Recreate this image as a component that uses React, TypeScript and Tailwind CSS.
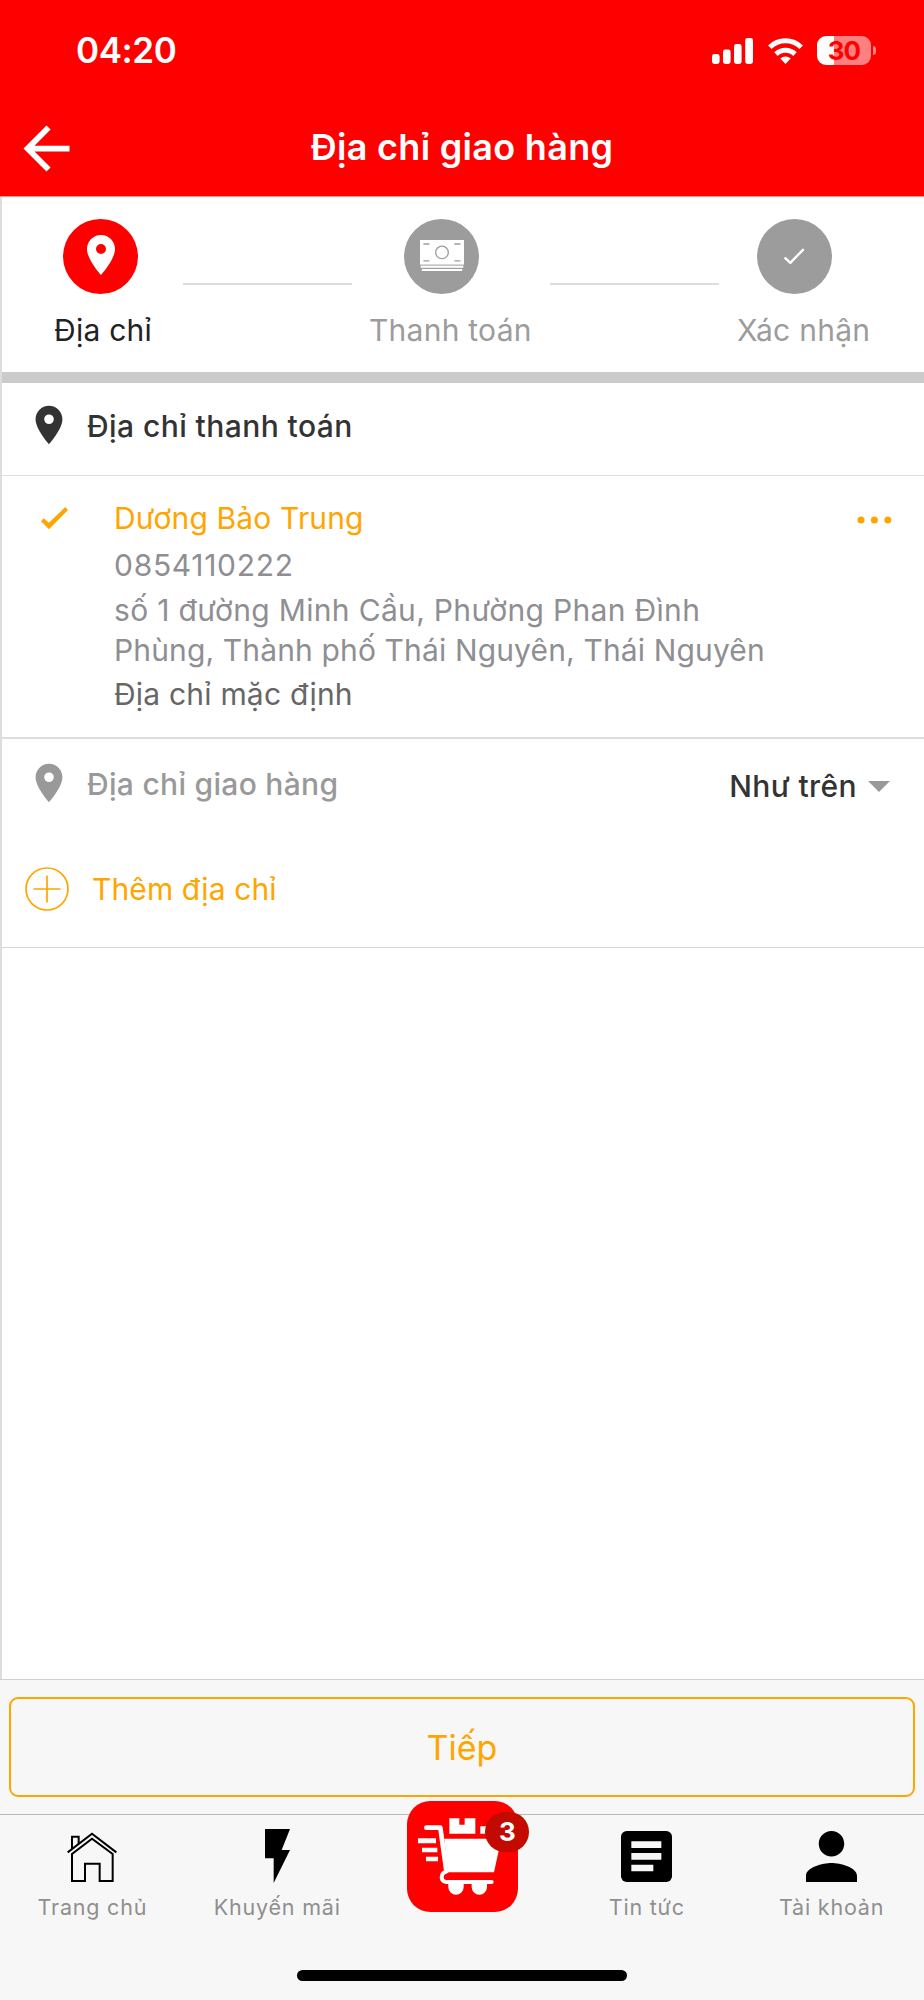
import type { ReactNode } from "react"
import { clsx } from "clsx"
import { MdArrowBack, MdPlace } from "react-icons/md"

function StatusBar() {
  return (
    <div className="flex h-[101px] items-center pl-[76px] pr-[48px] text-white">
      <span className="text-[35px] font-semibold leading-none tracking-[-0.4px]">04:20</span>
      <div className="ml-auto flex items-center">
        <svg className="h-[26px] w-[42px]" viewBox="0 0 42 26" fill="currentColor">
          <rect x="0" y="16" width="7.6" height="10" rx="2.4" />
          <rect x="11" y="11.5" width="7.6" height="14.5" rx="2.4" />
          <rect x="22" y="6" width="7.6" height="20" rx="2.4" />
          <rect x="33.2" y="0" width="7.8" height="26" rx="2.4" />
        </svg>
        <svg className="ml-[14px] h-[26px] w-[35px]" viewBox="0 0 35 26" fill="none" stroke="currentColor" strokeWidth="5">
          <path d="M1.8 9.2a22.3 22.3 0 0 1 31.4 0" />
          <path d="M8 16.1a13.6 13.6 0 0 1 19 0" />
          <path d="M17.5 26l-5.2-5.4a7.6 7.6 0 0 1 10.4 0z" fill="currentColor" stroke="none" />
        </svg>
        <div className="ml-[14px] flex h-[29px] w-[54px] items-center justify-center rounded-[9px] bg-[linear-gradient(90deg,#fff_17px,#ff8080_17px)]">
          <span className="text-[26px] font-bold leading-none tracking-[-0.8px] text-[#f00]">30</span>
        </div>
        <div className="ml-[2px] h-[9px] w-[3px] rounded-r-full bg-[#ff8080]" />
      </div>
    </div>
  )
}

function Header() {
  return (
    <header className="h-[197px] border-b border-[#ff8f8f] bg-[#f00]">
      <StatusBar />
      <div className="flex h-[95px] items-center px-[12px] text-white">
        <MdArrowBack className="size-[69px]" />
        <h1 className="flex-1 pb-[4px] text-center text-[36px] font-semibold leading-none tracking-[0.3px]">
          Địa chỉ giao hàng
        </h1>
        <div className="w-[69px]" />
      </div>
    </header>
  )
}

function MoneyIcon() {
  return (
    <svg className="-mt-[2px] h-[32px] w-[44px]" viewBox="0 0 44 32" fill="#fff">
      <rect x="0" y="0" width="44" height="24.6" />
      <rect x="0.7" y="25.6" width="42.6" height="2.2" />
      <rect x="1.8" y="29" width="40.4" height="2" />
      <g stroke="#9c9c9c" strokeWidth="1.3">
        <circle cx="22" cy="12.4" r="6.3" />
        <path d="M3.4 4h6M34.4 4h6M3.4 20.8h6M34.4 20.8h6" />
      </g>
    </svg>
  )
}

function Step({ label, offset, active, children }: { label: string; offset: string; active?: boolean; children: ReactNode }) {
  return (
    <div className={clsx("shrink-0", active ? "text-[#222]" : "text-[#9c9c9c]")}>
      <div className={clsx("flex size-[75px] items-center justify-center rounded-full", offset, active ? "bg-[#f00]" : "bg-[#9c9c9c]")}>
        {children}
      </div>
      <div className="mt-[16px] whitespace-nowrap text-[30px] leading-[40px] tracking-[0.25px]">{label}</div>
    </div>
  )
}

function Steps() {
  return (
    <div className="flex h-[175px] pl-[52px] pt-[22px]">
      <div className="w-[129px]">
        <Step label="Địa chỉ" offset="ml-[9px]" active>
          <MdPlace className="-mt-[3px] size-[48px] text-white" />
        </Step>
      </div>
      <div className="mt-[64px] h-[2px] w-[169px] bg-[#ddd]" />
      <div className="w-[198px] pl-[17px]">
        <Step label="Thanh toán" offset="ml-[35px]">
          <MoneyIcon />
        </Step>
      </div>
      <div className="mt-[64px] h-[2px] w-[169px] bg-[#ddd]" />
      <div className="pl-[18px]">
        <Step label="Xác nhận" offset="ml-[20px]">
          <svg className="-mt-[2px] mr-[2px] h-[18px] w-[22px]" viewBox="0 0 22 18" fill="none" stroke="#fff" strokeWidth="2.4" strokeLinecap="round" strokeLinejoin="round">
            <path d="M2.3 11.2l5 4.600L20 2.800" />
          </svg>
        </Step>
      </div>
    </div>
  )
}

function SelectedAddress() {
  return (
    <div className="flex h-[263px] border-b-2 border-[#ddd] pt-[20px]">
      <svg className="ml-[39px] mt-[11px] h-[23px] w-[27px]" viewBox="0 0 81 69" fill="#ffa500">
        <path d="M0 43l8-9 16 13L73 0l8 9-57 58z" />
      </svg>
      <div className="ml-[46px] whitespace-nowrap text-[30px] text-[#8e8e93]">
        <div className="leading-[44px] tracking-[0.15px] text-[#ffa500]">Dương Bảo Trung</div>
        <div className="leading-[50px] tracking-[0.7px]">0854110222</div>
        <div className="leading-[40px]">
          <span className="tracking-[0.32px]">số 1 đường Minh Cầu, Phường Phan Đình</span>
          <br />
          <span className="tracking-[0.14px]">Phùng, Thành phố Thái Nguyên, Thái Nguyên</span>
        </div>
        <div className="leading-[48px] tracking-[0.2px] text-[#666]">Địa chỉ mặc định</div>
      </div>
      <svg className="ml-auto mr-[31px] mt-[20px] h-[8px] w-[36px]" viewBox="0 0 36 8" fill="#ffa500">
        <circle cx="4" cy="4" r="3.5" />
        <circle cx="17.4" cy="4" r="3.5" />
        <circle cx="30.8" cy="4" r="3.5" />
      </svg>
    </div>
  )
}

function ShippingAddress() {
  return (
    <div className="h-[209px] border-b border-[#d5d5d5]">
      <div className="flex h-[90px] items-center pl-[24px] pr-[34px] text-[30px] font-medium leading-none">
        <MdPlace className="-mt-[2px] size-[46px] text-[#999]" />
        <span className="ml-[15px] tracking-[0.3px] text-[#999]">Địa chỉ giao hàng</span>
        <span className="ml-auto pt-[4px] tracking-[0.4px] text-[#333]">Như trên</span>
        <svg className="ml-[11px] mt-[5px] h-[11px] w-[22px]" viewBox="0 0 22 11" fill="#999">
          <path d="M0 0h22L11 11z" />
        </svg>
      </div>
      <div className="flex h-[118px] items-center pl-[23px] pt-[2px] text-[#ffa500]">
        <svg className="size-[44px]" viewBox="0 0 44 44" fill="none" stroke="currentColor" strokeWidth="1.7">
          <circle cx="22" cy="22" r="21" />
          <path d="M22 8.5v27M8.5 22h27" />
        </svg>
        <span className="ml-[23px] text-[30px] leading-none tracking-[0.1px]">Thêm địa chỉ</span>
      </div>
    </div>
  )
}

function CartTile() {
  return (
    <div className="relative -mt-[14px] ml-[2px] size-[111px]">
      <svg className="size-full" viewBox="0 0 333 333" fill="#fff">
        <rect width="333" height="333" rx="70" fill="#f00" />
        {/* speed lines */}
        <path d="M33 112h54v15H33zM45 140h46v14H45zM57 167h36v14H57z" />
        {/* parcels */}
        <path d="M127 52h30v19h16V52h32v46h-78zM220 76h30v22h-30z" />
        {/* basket */}
        <path d="M112 113h171l-22 101H122z" />
        <path d="M58 80h42l18 130" fill="none" stroke="#fff" strokeWidth="14" strokeLinecap="round" strokeLinejoin="round" />
        <path d="M118 212c-18 4-19 30 0 31h136" fill="none" stroke="#fff" strokeWidth="12" strokeLinecap="round" />
        {/* wheels */}
        <path d="M124 243h46v15a23 23 0 0 1-46 0zM194 243h46v15a23 23 0 0 1-46 0z" />
      </svg>
      <div className="absolute left-[78px] top-[11px] flex h-[40px] w-[44px] items-center justify-center rounded-[20px] bg-[#c20a00] text-[26px] font-bold leading-none text-white">
        3
      </div>
    </div>
  )
}

function Tab({ label, children }: { label: string; children: ReactNode }) {
  return (
    <div className="flex flex-1 flex-col items-center">
      <div className="flex h-[81px] items-center justify-center pt-[1px]">{children}</div>
      <span className="whitespace-nowrap text-[21.5px] leading-[22px] tracking-[0.8px] text-[#8f8f8f]">{label}</span>
    </div>
  )
}

function TabBar() {
  return (
    <nav className="flex h-[156px] border-t border-[#bbb]">
      <Tab label="Trang chủ">
        <svg className="mt-[2px] h-[51px] w-[50px]" viewBox="0 0 150 153" fill="none" stroke="#000" strokeWidth="6">
          <path d="M2 61L75 5l73 56" />
          <path d="M15 66v81h39V95h44v52h39V66L75 20z" />
          <path d="M15 51V14h20v22" />
        </svg>
      </Tab>
      <Tab label="Khuyến mãi">
        <svg className="h-[54px] w-[25px]" viewBox="0 0 75 162" fill="#000">
          <path d="M0 0h75L50 63h25L26 162V88H0z" />
        </svg>
      </Tab>
      <div className="flex flex-1 justify-center">
        <CartTile />
      </div>
      <Tab label="Tin tức">
        <svg className="size-[51px]" viewBox="0 0 153 153">
          <rect width="153" height="153" rx="17" fill="#000" />
          <path d="M31 31h90v20H31zM31 66h90v20H31zM31 101h66v20H31z" fill="#f7f7f7" />
        </svg>
      </Tab>
      <Tab label="Tài khoản">
        <svg className="size-[51px]" viewBox="4 4 16 16" fill="#000">
          <path d="M12 12c2.21 0 4-1.79 4-4s-1.79-4-4-4-4 1.79-4 4 1.79 4 4 4zm0 2c-2.67 0-8 1.34-8 4v2h16v-2c0-2.66-5.33-4-8-4z" />
        </svg>
      </Tab>
    </nav>
  )
}

export default function App() {
  return (
    <div className="flex h-[2000px] w-[924px] flex-col overflow-hidden bg-white font-['Inter','Noto_Sans',sans-serif]">
      <Header />
      <main className="flex-1 border-l-2 border-[#ddd]">
        <Steps />
        <div className="h-[11px] bg-[#cbcbcb]" />
        <div className="flex h-[93px] items-center border-b border-[#ddd] pb-[6px] pl-[24px] text-[#333]">
          <MdPlace className="-mt-[2px] size-[46px]" />
          <h2 className="ml-[15px] text-[30px] font-medium leading-none tracking-[0.43px]">Địa chỉ thanh toán</h2>
        </div>
        <SelectedAddress />
        <ShippingAddress />
      </main>
      <footer className="h-[321px] border-t border-[#d0d0d0] bg-[#f7f7f7]">
        <div className="h-[134px] px-[9px] pt-[17px]">
          <button className="h-[100px] w-full rounded-[9px] border-2 border-[#ffa500] text-[34px] text-[#ffa500]">
            Tiếp
          </button>
        </div>
        <TabBar />
        <div className="mx-auto h-[11px] w-[330px] rounded-full bg-black" />
      </footer>
    </div>
  )
}
